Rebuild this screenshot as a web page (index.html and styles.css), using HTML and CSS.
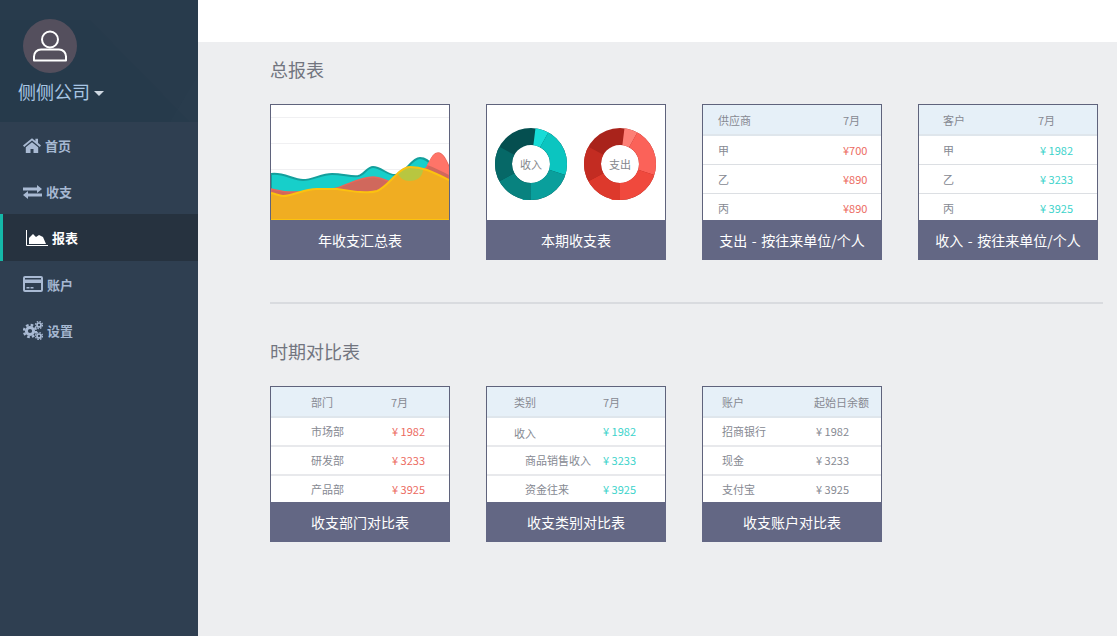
FILE: index.html
```html
<!DOCTYPE html>
<html lang="zh-CN">
<head>
<meta charset="utf-8">
<title>报表</title>
<link rel="stylesheet" href="styles.css">
</head>
<body>
<div class="app">
  <aside class="sidebar">
    <header class="brand">
      <svg class="brand-bg" viewBox="0 0 198 122" aria-hidden="true">
        <polygon points="0,20 90,20 190,122 0,122" fill="#24384a" opacity=".3"/>
        <polygon points="198,75 170,122 198,122" fill="#2d4256" opacity=".15"/>
      </svg>
      <div class="avatar">
        <svg viewBox="0 0 36 32" width="36" height="32" fill="none" stroke="#fff" stroke-width="2">
          <circle cx="18" cy="9.5" r="8"/>
          <path d="M2 30.500v-4c0-4 3-7 7-7h18c4 0 7 3 7 7v4z" stroke-linejoin="round"/>
        </svg>
      </div>
      <div class="company">侧侧公司<span class="caret"></span></div>
    </header>
    <nav class="nav">
      <a class="nav-item">
        <svg class="ico" width="18" height="15" viewBox="0 0 18 15"><path d="M9 .2 0 7.600l1.200 1.400L9 2.600 16.800 9 18 7.600l-3-2.500V.8h-2.600v2.100L9 .2zM2.800 9.300V15h4.700v-4h3v4h4.700V9.300L9 4.200z" fill="#a9bad3"/></svg>
        <span>首页</span>
      </a>
      <a class="nav-item">
        <svg class="ico" width="19" height="14" viewBox="0 0 19 14"><path d="M0 2.500h14V0l5 4-5 4V5.500H0zM19 8.500H5V6l-5 4 5 4v-2.500h14z" fill="#a9bad3"/></svg>
        <span>收支</span>
      </a>
      <a class="nav-item active">
        <svg class="ico" width="22" height="16" viewBox="0 0 22 16"><path d="M.5 0v15.500H22" fill="none" stroke="#fff"/><path d="M3 14V8l4-4 3 3 3-2 4 2 3 7z" fill="#fff"/></svg>
        <span>报表</span>
      </a>
      <a class="nav-item">
        <svg class="ico" width="20" height="16" viewBox="0 0 20 16"><rect x="1" y="1" width="18" height="14" rx="1" fill="none" stroke="#a9bad3" stroke-width="2"/><path d="M1 3.500h18v3.500H1zM3.500 11h3v1.500h-3zM7.500 11h3v1.500h-3z" fill="#a9bad3"/></svg>
        <span>账户</span>
      </a>
      <a class="nav-item">
        <svg class="ico" width="20" height="19" viewBox="0 0 20 19" fill="none" stroke="#a9bad3">
          <circle cx="7" cy="10" r="3.600" stroke-width="3"/>
          <circle cx="7" cy="10" r="6" stroke-width="2.400" stroke-dasharray="2.600 2.100"/>
          <circle cx="16" cy="4" r="2" stroke-width="1.700"/>
          <circle cx="16" cy="4" r="3.500" stroke-width="1.300" stroke-dasharray="1.500 1.250"/>
          <circle cx="16" cy="15" r="2" stroke-width="1.700"/>
          <circle cx="16" cy="15" r="3.500" stroke-width="1.300" stroke-dasharray="1.500 1.250"/>
        </svg>
        <span>设置</span>
      </a>
    </nav>
  </aside>

  <main class="main">
    <div class="topbar"></div>
    <div class="content">
      <section>
        <h2 class="section-title">总报表</h2>
        <div class="cards">
          <article class="card">
            <div class="thumb">
              <svg viewBox="0 0 178 115" width="178" height="115">
                <path d="M0 12.500h178M0 38.500h178M0 64.500h178" stroke="#f0f0f2" fill="none"/>
                <path d="M0 69C12 67 22 75 32 75C42 75 50 69 61 69C72 69 80 72 87 71C93 70 96 62 102 62C110 62 116 70 124 70C134 70 140 53 149 53C157 53 160 60 165 64C170 68 174 72 178 75V115H0Z" fill="#17cfca" stroke="#149f9c" stroke-width="2"/>
                <path d="M0 84C6 85 12 87 19 87C35 87 50 88 66 83C78 79 90 72 102 72C110 72 116 77 122 77C134 77 146 72 156 62C160 55 162 48 167 48C172 48 175 55 178 62V115H0Z" fill="#d0685c" stroke="#e8675a" stroke-width="1.500"/>
                <path d="M156 60C160 54 162 48 167 48C172 48 175 55 178 62V70C170 66 162 62 156 60Z" fill="#ff7468"/>
                <path d="M0 88C5 89 8 91 12 91C22 91 32 84 46 84C54 84 60 84 66 84C76 85 82 87 89 87C96 87 100 88 106 86C118 81 128 62 139 62C146 62 150 63 156 65C164 68 172 72 178 75V115H0Z" fill="#f0ad22"/>
                <path d="M126 68C130 64 134 62 139 62C144 62 148 63 152 64C152 72 146 76 138 76C133 76 129 73 126 68Z" fill="#b8c640"/>
                <path d="M0 88C5 89 8 91 12 91C22 91 32 84 46 84C54 84 60 84 66 84C76 85 82 87 89 87C96 87 100 88 106 86C118 81 128 62 139 62C146 62 150 63 156 65C164 68 172 72 178 75" fill="none" stroke="#fcc20f" stroke-width="2"/>
                <path d="M0 114.500h178" stroke="#fcc20f"/>
              </svg>
            </div>
            <h3 class="card-label">年收支汇总表</h3>
          </article>

          <article class="card">
            <div class="thumb donuts">
              <div class="donut">
                <svg viewBox="0 0 72 72" width="72" height="72">
                  <g fill="none" stroke-width="17" transform="rotate(-90 36 36)">
                    <circle cx="36" cy="36" r="27.500" pathLength="100" stroke="#054f50"/>
                    <circle cx="36" cy="36" r="27.500" pathLength="100" stroke="#16dcd7" stroke-dasharray="6 94" stroke-dashoffset="-2"/>
                    <circle cx="36" cy="36" r="27.500" pathLength="100" stroke="#0bc5c0" stroke-dasharray="22 78" stroke-dashoffset="-8"/>
                    <circle cx="36" cy="36" r="27.500" pathLength="100" stroke="#0a9f9c" stroke-dasharray="20 80" stroke-dashoffset="-30"/>
                    <circle cx="36" cy="36" r="27.500" pathLength="100" stroke="#08827f" stroke-dasharray="17 83" stroke-dashoffset="-50"/>
                    <circle cx="36" cy="36" r="27.500" pathLength="100" stroke="#066867" stroke-dasharray="16 84" stroke-dashoffset="-67"/>
                  </g>
                </svg>
                <span class="donut-label">收入</span>
              </div>
              <div class="donut">
                <svg viewBox="0 0 72 72" width="72" height="72">
                  <g fill="none" stroke-width="17" transform="rotate(-90 36 36)">
                    <circle cx="36" cy="36" r="27.500" pathLength="100" stroke="#a9231b"/>
                    <circle cx="36" cy="36" r="27.500" pathLength="100" stroke="#fd7f76" stroke-dasharray="6 94" stroke-dashoffset="-2"/>
                    <circle cx="36" cy="36" r="27.500" pathLength="100" stroke="#fb6259" stroke-dasharray="22 78" stroke-dashoffset="-8"/>
                    <circle cx="36" cy="36" r="27.500" pathLength="100" stroke="#f0493d" stroke-dasharray="20 80" stroke-dashoffset="-30"/>
                    <circle cx="36" cy="36" r="27.500" pathLength="100" stroke="#dd392c" stroke-dasharray="17 83" stroke-dashoffset="-50"/>
                    <circle cx="36" cy="36" r="27.500" pathLength="100" stroke="#c32c22" stroke-dasharray="16 84" stroke-dashoffset="-67"/>
                  </g>
                </svg>
                <span class="donut-label">支出</span>
              </div>
            </div>
            <h3 class="card-label">本期收支表</h3>
          </article>

          <article class="card">
            <div class="thumb table cols-sup">
              <div class="row head"><span>供应商</span><span>7月</span></div>
              <div class="row"><span>甲</span><span class="red">¥700</span></div>
              <div class="row"><span>乙</span><span class="red">¥890</span></div>
              <div class="row"><span>丙</span><span class="red">¥890</span></div>
            </div>
            <h3 class="card-label wide">支出 - 按往来单位/个人</h3>
          </article>

          <article class="card">
            <div class="thumb table cols-cus">
              <div class="row head"><span>客户</span><span>7月</span></div>
              <div class="row"><span>甲</span><span class="teal">¥ 1982</span></div>
              <div class="row"><span>乙</span><span class="teal">¥ 3233</span></div>
              <div class="row"><span>丙</span><span class="teal">¥ 3925</span></div>
            </div>
            <h3 class="card-label wide">收入 - 按往来单位/个人</h3>
          </article>
        </div>
      </section>

      <hr class="divider">

      <section>
        <h2 class="section-title">时期对比表</h2>
        <div class="cards compare">
          <article class="card">
            <div class="thumb table cols-dep">
              <div class="row head"><span>部门</span><span>7月</span></div>
              <div class="row"><span>市场部</span><span class="red">¥ 1982</span></div>
              <div class="row"><span>研发部</span><span class="red">¥ 3233</span></div>
              <div class="row"><span>产品部</span><span class="red">¥ 3925</span></div>
            </div>
            <h3 class="card-label">收支部门对比表</h3>
          </article>

          <article class="card">
            <div class="thumb table cols-cat">
              <div class="row head"><span>类别</span><span>7月</span></div>
              <div class="row"><span class="low">收入</span><span class="teal">¥ 1982</span></div>
              <div class="row"><span class="indent">商品销售收入</span><span class="teal">¥ 3233</span></div>
              <div class="row"><span class="indent">资金往来</span><span class="teal">¥ 3925</span></div>
            </div>
            <h3 class="card-label">收支类别对比表</h3>
          </article>

          <article class="card">
            <div class="thumb table cols-acc">
              <div class="row head"><span>账户</span><span>起始日余额</span></div>
              <div class="row"><span>招商银行</span><span class="gap-v">¥ 1982</span></div>
              <div class="row"><span>现金</span><span class="gap-v">¥ 3233</span></div>
              <div class="row"><span>支付宝</span><span class="gap-v">¥ 3925</span></div>
            </div>
            <h3 class="card-label">收支账户对比表</h3>
          </article>
        </div>
      </section>
    </div>
  </main>
</div>
</body>
</html>
```
FILE: styles.css
```css
* { box-sizing: border-box; }
html, body { margin: 0; height: 100%; overflow: hidden; }
body {
  font-family: "Noto Sans CJK SC", "Noto Sans", sans-serif;
  background: #edeef0;
  color: #666;
}
.app { display: flex; height: 636px; }

.sidebar { width: 198px; flex: none; background: #2f3f51; }
.brand {
  position: relative;
  height: 122px;
  background: #283b4c;
  padding: 19px 0 0 18px;
  overflow: hidden;
}
.brand-bg { position: absolute; inset: 0; width: 198px; height: 122px; }
.avatar {
  position: relative;
  width: 54px;
  height: 54px;
  margin-left: 5px;
  border-radius: 50%;
  background: #544f5d;
  display: flex;
  align-items: center;
  justify-content: center;
}
.company {
  position: relative;
  margin-top: 5px;
  font-size: 18px;
  line-height: 26px;
  color: #a8c6e4;
  display: flex;
  align-items: center;
}
.caret {
  margin: 4px 0 0 4px;
  border-left: 5px solid transparent;
  border-right: 5px solid transparent;
  border-top: 5px solid #cfd8e2;
}

.nav-item {
  height: 46px;
  padding: 0 0 0 23px;
  display: flex;
  align-items: center;
  gap: 4px;
  font-size: 13px;
  font-weight: 700;
  color: #a6b8d2;
}
.nav-item:first-child, .nav-item:nth-child(2) { padding-top: 1px; }
.ico { flex: none; }
.nav-item.active {
  height: 47px;
  background: #26323f;
  color: #fff;
  border-left: 3px solid #15b8a8;
}

.main { flex: 1; min-width: 0; display: flex; flex-direction: column; }
.topbar { height: 42px; background: #fff; flex: none; }
.content { padding: 17px 14px 0 72px; }
.section-title {
  margin: 0 0 25px;
  font-size: 18px;
  line-height: 20px;
  font-weight: 400;
  color: #72757f;
}
.divider {
  margin: 42px 0 37px;
  height: 2px;
  border: 0;
  background: #d9dbdf;
}

.cards { display: flex; gap: 36px; }
.card { width: 180px; height: 156px; display: flex; flex-direction: column; }
.thumb {
  height: 116px;
  background: #fff;
  border: 1px solid #5f637c;
  border-bottom: 0;
  overflow: hidden;
}
.thumb > svg { display: block; }
.card-label {
  margin: 0;
  height: 40px;
  background: #636784;
  color: #fff;
  font-size: 14px;
  font-weight: 400;
  line-height: 40px;
  text-align: center;
  white-space: nowrap;
}
.card-label.wide { word-spacing: 1.5px; }

.donuts {
  display: flex;
  gap: 17px;
  padding: 23px 0 0 8px;
}
.donut { position: relative; width: 72px; height: 72px; }
.donut svg { display: block; }
.donut-label {
  position: absolute;
  inset: 0;
  display: flex;
  align-items: center;
  justify-content: center;
  font-size: 11px;
  color: #85878c;
}

.row {
  display: grid;
  height: 29px;
  align-items: center;
  font-size: 11px;
  line-height: 16px;
  color: #868992;
  border-bottom: 1px solid #dcdfe3;
}
.row > span { white-space: nowrap; }
.row.head {
  height: 31px;
  background: #e6f0f8;
  border-bottom: 2px solid #dfe6ec;
}
.compare .row:not(.head) {
  padding-bottom: 1px;
  border-bottom: 2px solid #e8e9ec;
}
.red { color: #ec6b5f; }
.teal { color: #3cd3cb; }
.low { position: relative; top: 2px; }
.indent { padding-left: 11px; }

.cols-sup .row { grid-template-columns: 125px 1fr; padding-left: 15px; }
.cols-cus .row { grid-template-columns: 95px 1fr; padding-left: 24px; }
.cols-cus .teal { padding-left: 2px; }
.cols-dep .row { grid-template-columns: 80px 1fr; padding-left: 40px; }
.cols-dep .red { padding-left: 1px; }
.cols-cat .row { grid-template-columns: 89px 1fr; padding-left: 27px; }
.cols-acc .row { grid-template-columns: 92px 1fr; padding-left: 19px; }
.gap-v { padding-left: 2px; }
```
